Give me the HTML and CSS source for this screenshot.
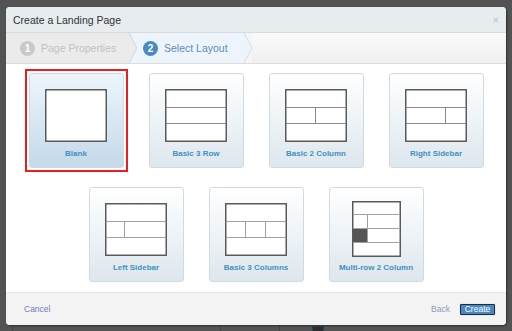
FILE: index.html
```html
<!DOCTYPE html>
<html lang="en">
<head>
    <meta charset="UTF-8" />
    <meta name="viewport" content="width=device-width, initial-scale=1" />
    <title>Create a Landing Page</title>
    <link rel="stylesheet" href="styles.css">
</head>
<body>
    <div class="backdrop">
        <div class="backdrop-strip">
            <span class="bd-line bd-a"></span>
            <span class="bd-line bd-b"></span>
            <span class="bd-line bd-c"></span>
            <span class="bd-box"></span>
        </div>
    </div>

    <div class="modal">
        <div class="modal-header">
            <span class="modal-title">Create a Landing Page</span>
            <span class="modal-close">&times;</span>
        </div>

        <div class="steps">
            <div class="step step-done">
                <span class="step-num">1</span>
                <span class="step-label">Page Properties</span>
            </div>
            <svg class="step-arrow" width="9" height="30" viewBox="0 0 9 30">
                <rect x="0" y="0" width="9" height="30" fill="#eef4fb"/>
                <polygon points="0,0 1,0 9,15 1,30 0,30" fill="#ebebeb"/>
                <polyline points="1,0 9,15 1,30" fill="none" stroke="#d6d6d6" stroke-width="1"/>
            </svg>
            <div class="step step-current">
                <span class="step-num">2</span>
                <span class="step-label">Select Layout</span>
            </div>
            <svg class="step-arrow" width="9" height="30" viewBox="0 0 9 30">
                <rect x="0" y="0" width="9" height="30" fill="#f5f5f5"/>
                <polygon points="0,0 1,0 9,15 1,30 0,30" fill="#eef4fb"/>
                <polyline points="1,0 9,15 1,30" fill="none" stroke="#d6dde4" stroke-width="1"/>
            </svg>
            <div class="step-rest"></div>
        </div>

        <div class="modal-body">
            <div class="layout-grid">
                <div class="layout-card selected">
                    <div class="thumb">
                        <svg width="62" height="53" viewBox="0 0 62 53">
                            <rect x="0.75" y="0.75" width="60.5" height="51.5" fill="#fff" stroke="#5a5a5a" stroke-width="1.5"/>
                        </svg>
                    </div>
                    <div class="layout-name">Blank</div>
                </div>
                <div class="layout-card">
                    <div class="thumb">
                        <svg width="62" height="53" viewBox="0 0 62 53">
                            <rect x="0.75" y="0.75" width="60.5" height="51.5" fill="#fff" stroke="#5a5a5a" stroke-width="1.5"/>
                            <path d="M1 18.5H61M1 34.5H61" stroke="#8a8a8a" stroke-width="1"/>
                        </svg>
                    </div>
                    <div class="layout-name">Basic 3 Row</div>
                </div>
                <div class="layout-card">
                    <div class="thumb">
                        <svg width="62" height="53" viewBox="0 0 62 53">
                            <rect x="0.75" y="0.75" width="60.5" height="51.5" fill="#fff" stroke="#5a5a5a" stroke-width="1.5"/>
                            <path d="M1 18.5H61M1 34.5H61M30.5 18.5V34.5" stroke="#8a8a8a" stroke-width="1"/>
                        </svg>
                    </div>
                    <div class="layout-name">Basic 2 Column</div>
                </div>
                <div class="layout-card">
                    <div class="thumb">
                        <svg width="62" height="53" viewBox="0 0 62 53">
                            <rect x="0.75" y="0.75" width="60.5" height="51.5" fill="#fff" stroke="#5a5a5a" stroke-width="1.5"/>
                            <path d="M1 18.5H61M1 34.5H61M40.5 18.5V34.5" stroke="#8a8a8a" stroke-width="1"/>
                        </svg>
                    </div>
                    <div class="layout-name">Right Sidebar</div>
                </div>
                <div class="layout-card">
                    <div class="thumb">
                        <svg width="62" height="53" viewBox="0 0 62 53">
                            <rect x="0.75" y="0.75" width="60.5" height="51.5" fill="#fff" stroke="#5a5a5a" stroke-width="1.5"/>
                            <path d="M1 18.5H61M1 34.5H61M19.5 18.5V34.5" stroke="#a0a0a0" stroke-width="1"/>
                        </svg>
                    </div>
                    <div class="layout-name">Left Sidebar</div>
                </div>
                <div class="layout-card">
                    <div class="thumb">
                        <svg width="62" height="53" viewBox="0 0 62 53">
                            <rect x="0.75" y="0.75" width="60.5" height="51.5" fill="#fff" stroke="#5a5a5a" stroke-width="1.5"/>
                            <path d="M1 18.5H61M1 34.5H61M20.5 18.5V34.5M40.5 18.5V34.5" stroke="#a0a0a0" stroke-width="1"/>
                        </svg>
                    </div>
                    <div class="layout-name">Basic 3 Columns</div>
                </div>
                <div class="layout-card">
                    <div class="thumb">
                        <svg width="49" height="56" viewBox="0 0 49 56">
                            <rect x="0.75" y="0.75" width="47.5" height="54.5" fill="#fff" stroke="#5a5a5a" stroke-width="1.5"/>
                            <rect x="1" y="27.5" width="15" height="14" fill="#555"/>
                            <path d="M1 13.5H48M1 27.5H48M1 41.5H48M15.5 13.5V41.5" stroke="#a0a0a0" stroke-width="1"/>
                        </svg>
                    </div>
                    <div class="layout-name">Multi-row 2 Column</div>
                </div>
            </div>
        </div>

        <div class="modal-footer">
            <a class="footer-link" href="#">Cancel</a>
            <div class="footer-actions">
                <a class="footer-link back-link" href="#">Back</a>
                <button class="create-button">Create</button>
            </div>
        </div>
    </div>
</body>
</html>
```

FILE: styles.css
```css
body, html {
    margin: 0;
    padding: 0;
    height: 100%;
    overflow: hidden;
    font-family: 'Liberation Sans', Arial, sans-serif;
    background: #535353;
}
.backdrop {
    height: 100%;
    display: flex;
    flex-direction: column;
    justify-content: flex-end;
}
.backdrop-strip {
    height: 6px;
    position: relative;
}
.bd-line {
    position: absolute;
    top: 0;
    bottom: 0;
    width: 1px;
    background: #454545;
}
.bd-a { left: 12px; }
.bd-b { left: 220px; }
.bd-c { left: 279px; }
.bd-box {
    position: absolute;
    left: 312px;
    top: 1px;
    width: 10px;
    height: 8px;
    border: 1px solid #1f4a5a;
    background: #2d2d2d;
}
.modal {
    position: absolute;
    left: 6px;
    top: 7px;
    width: 500px;
    height: 318px;
    background: #ffffff;
    border-radius: 4px;
    box-shadow: 1px 1px 2px rgba(0, 0, 0, 0.45);
    display: flex;
    flex-direction: column;
    overflow: hidden;
}
.modal-header {
    height: 25px;
    background: #e7ecef;
    border-bottom: 1px solid #d5dbdf;
    display: flex;
    align-items: center;
    justify-content: space-between;
    padding: 0 7px 0 7px;
    flex-shrink: 0;
}
.modal-title {
    font-size: 10.5px;
    color: #333333;
    padding-top: 1px;
}
.modal-close {
    font-size: 11px;
    color: #bcbcbc;
    line-height: 1;
    margin-top: 1px;
}
.steps {
    height: 30px;
    display: flex;
    border-bottom: 1px solid #dcdcdc;
    flex-shrink: 0;
}
.step {
    display: flex;
    align-items: center;
    font-size: 10.5px;
}
.step-done {
    width: 122px;
    background: #ebebeb;
    padding-left: 14px;
    box-sizing: border-box;
}
.step-current {
    width: 106px;
    background: #eef4fb;
    padding-left: 6px;
    box-sizing: border-box;
}
.step-arrow {
    display: block;
    flex-shrink: 0;
}
.step-rest {
    flex: 1;
    background: linear-gradient(#fafafa, #efefef);
}
.step-num {
    width: 15px;
    height: 15px;
    border-radius: 50%;
    color: #ffffff;
    font-weight: bold;
    font-size: 10px;
    display: flex;
    align-items: center;
    justify-content: center;
    margin-right: 6px;
}
.step-done .step-num {
    background: #c9c9c9;
}
.step-done .step-label {
    color: #c2c2c2;
}
.step-current .step-num {
    background: #4a8ac3;
}
.step-current .step-label {
    color: #5a8dc2;
}
.modal-body {
    flex: 1;
    padding-top: 9px;
}
.layout-grid {
    display: flex;
    flex-wrap: wrap;
    justify-content: center;
    column-gap: 25px;
    row-gap: 19px;
}
.layout-card {
    position: relative;
    width: 95px;
    height: 95px;
    box-sizing: border-box;
    border: 1px solid #cfdae3;
    border-radius: 3px;
    background: linear-gradient(#ffffff, #dde7ee);
    padding-top: 13px;
}
.layout-card.selected {
    background: linear-gradient(#edf5fc, #c4d9e9);
}
/* red selection frame */
.layout-card.selected::before {
    content: "";
    position: absolute;
    left: -5px;
    top: -5px;
    right: -5px;
    bottom: -5px;
    border: 2px solid #ee1c1c;
}
.thumb {
    height: 56px;
    display: flex;
    align-items: center;
    justify-content: center;
}
.thumb svg {
    display: block;
}
.layout-name {
    margin-top: 6px;
    font-size: 8px;
    line-height: 10px;
    font-weight: bold;
    color: #4291bd;
    text-align: center;
}
.modal-footer {
    height: 33px;
    box-sizing: border-box;
    background: #f3f3f3;
    border-top: 1px solid #e6e6e6;
    display: flex;
    align-items: center;
    justify-content: space-between;
    padding: 0 11px 0 18px;
    flex-shrink: 0;
}
.footer-link {
    font-size: 8.5px;
    color: #6f82b3;
    text-decoration: none;
}
.back-link {
    color: #8e9bb6;
}
.footer-actions {
    display: flex;
    align-items: center;
    gap: 10px;
}
.create-button {
    width: 35px;
    height: 11px;
    padding: 0;
    border: 1px solid #1b2d42;
    border-radius: 1px;
    background: #4a86c1;
    color: #ffffff;
    font-family: 'Liberation Sans', Arial, sans-serif;
    font-size: 8.5px;
    line-height: 9px;
    box-shadow: 0 0 1px rgba(0, 0, 0, 0.4);
}
```
